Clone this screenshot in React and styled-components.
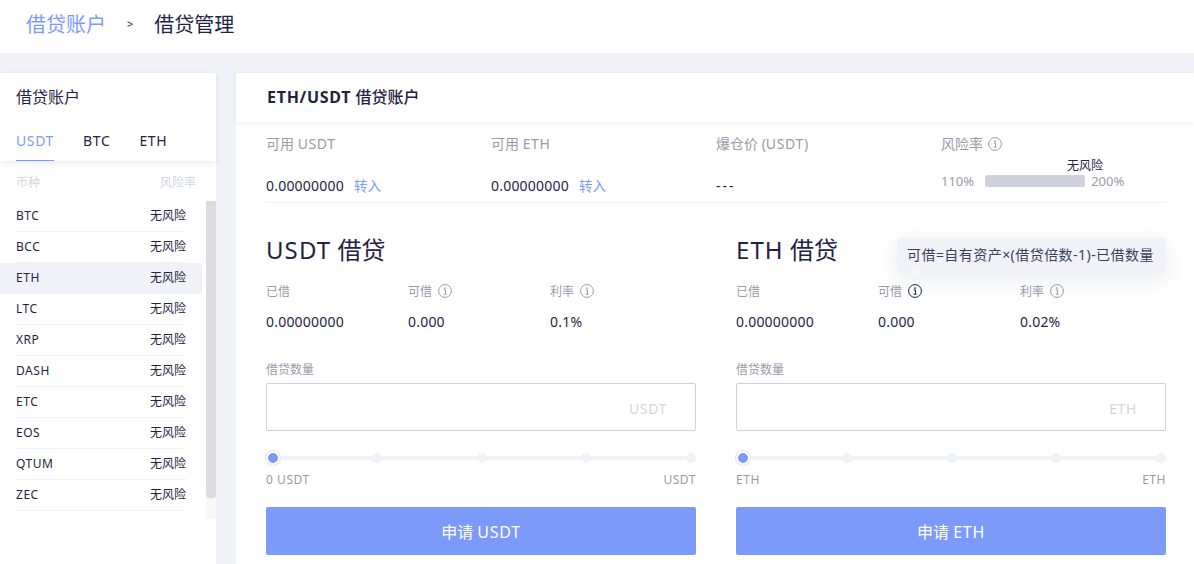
import React from 'react';
import styled, { createGlobalStyle } from 'styled-components';

const coins = ['BTC', 'BCC', 'ETH', 'LTC', 'XRP', 'DASH', 'ETC', 'EOS', 'QTUM', 'ZEC'];

const InfoIcon = ({ dark }) => (
  <Info viewBox="0 0 14 14" $dark={dark}>
    <circle cx="7" cy="7" r="6.4" fill="none" stroke="currentColor" strokeWidth="1" />
    <circle cx="7" cy="4.1" r="0.9" fill="currentColor" />
    <path d="M5.7 6h1.8v4M5.6 10.2h3" fill="none" stroke="currentColor" strokeWidth="1" />
  </Info>
);

const LoanPanel = ({ coin, rate, hovered }) => (
  <Panel>
    <PanelTitle>
      <Latin>{coin}</Latin> 借贷
    </PanelTitle>
    <Facts>
      <Fact>
        <SmallLabel>已借</SmallLabel>
        <FactValue>0.00000000</FactValue>
      </Fact>
      <Fact>
        <SmallLabel>
          可借 <InfoIcon dark={hovered} />
        </SmallLabel>
        <FactValue>0.000</FactValue>
      </Fact>
      <Fact>
        <SmallLabel>
          利率 <InfoIcon />
        </SmallLabel>
        <FactValue>{rate}</FactValue>
      </Fact>
    </Facts>
    <AmountLabel>借贷数量</AmountLabel>
    <AmountBox>
      <Unit>{coin}</Unit>
    </AmountBox>
    <Slider>
      <Knob />
      <Dot />
      <Dot />
      <Dot />
      <Dot />
    </Slider>
    <SliderLabels>
      <span>{coin === 'USDT' ? '0 USDT' : coin}</span>
      <span>{coin}</span>
    </SliderLabels>
    <ApplyButton>
      申请 <Latin>{coin}</Latin>
    </ApplyButton>
  </Panel>
);

const App = () => {
  return (
    <React.Fragment>
      <GlobalStyle />
      <Page>
        <TopBar>
          <Crumb>借贷账户</Crumb>
          <CrumbArrow>&gt;</CrumbArrow>
          <CrumbCurrent>借贷管理</CrumbCurrent>
        </TopBar>
        <Body>
          <Sidebar>
            <SideHead>
              <SideTitle>借贷账户</SideTitle>
              <Tabs>
                <Tab $active>USDT</Tab>
                <Tab>BTC</Tab>
                <Tab>ETH</Tab>
              </Tabs>
            </SideHead>
            <ListHead>
              <span>币种</span>
              <span>风险率</span>
            </ListHead>
            <ListArea>
              <CoinList>
                {coins.map((coin) => (
                  <CoinRow key={coin} $active={coin === 'ETH'}>
                    <CoinCell $active={coin === 'ETH'}>
                      <Latin>{coin}</Latin>
                      <span>无风险</span>
                    </CoinCell>
                  </CoinRow>
                ))}
              </CoinList>
              <ScrollTrack>
                <ScrollThumb />
              </ScrollTrack>
            </ListArea>
          </Sidebar>
          <Main>
            <MainHead>
              <Latin>ETH/USDT</Latin> <HeadCjk>借贷账户</HeadCjk>
            </MainHead>
            <Content>
              <Stats>
                <Stat>
                  <StatLabel>
                    可用 <Latin>USDT</Latin>
                  </StatLabel>
                  <StatValue>
                    <Digits>0.00000000</Digits>
                    <Transfer>转入</Transfer>
                  </StatValue>
                </Stat>
                <Stat>
                  <StatLabel>
                    可用 <Latin>ETH</Latin>
                  </StatLabel>
                  <StatValue>
                    <Digits>0.00000000</Digits>
                    <Transfer>转入</Transfer>
                  </StatValue>
                </Stat>
                <Stat>
                  <StatLabel>
                    爆仓价 (<Latin>USDT</Latin>)
                  </StatLabel>
                  <StatValue>
                    <Dashes>---</Dashes>
                  </StatValue>
                </Stat>
                <Stat>
                  <RiskLabel>
                    风险率 <InfoIcon />
                  </RiskLabel>
                  <RiskRow>
                    <RiskEnd>110%</RiskEnd>
                    <RiskBar>
                      <RiskText>无风险</RiskText>
                    </RiskBar>
                    <RiskEnd>200%</RiskEnd>
                  </RiskRow>
                </Stat>
              </Stats>
              <Panels>
                <LoanPanel coin="USDT" rate="0.1%" />
                <LoanPanel coin="ETH" rate="0.02%" hovered />
                <Tooltip>可借=自有资产×(借贷倍数-1)-已借数量</Tooltip>
              </Panels>
            </Content>
          </Main>
        </Body>
      </Page>
    </React.Fragment>
  );
};

export default App;

const GlobalStyle = createGlobalStyle`
  html, body {
    margin: 0;
    padding: 0;
    height: 100%;
    overflow: hidden;
  }
  body {
    font-family: "Noto Sans", "Noto Sans CJK SC", sans-serif;
    color: #1f2440;
  }
  * {
    box-sizing: border-box;
  }
`;

const Latin = styled.span`
  letter-spacing: 0.045em;
`;

const Digits = styled.span`
  letter-spacing: 0.015em;
`;

const Dashes = styled.span`
  letter-spacing: 2px;
`;

const Page = styled.div`
  width: 1194px;
  height: 564px;
  overflow: hidden;
  background-color: #f1f2f8;
`;

const TopBar = styled.div`
  height: 53px;
  padding: 0 0 6px 26px;
  display: flex;
  align-items: center;
  background-color: #fff;
`;

const Crumb = styled.span`
  font-size: 20px;
  color: #7c9afa;
`;

const CrumbArrow = styled.span`
  margin: 0 21px;
  font-size: 11px;
`;

const CrumbCurrent = styled.span`
  font-size: 20px;
`;

const Body = styled.div`
  display: flex;
  gap: 20px;
  margin-top: 20px;
  height: 491px;
`;

const Sidebar = styled.div`
  width: 216px;
  background-color: #fff;
  border-radius: 0 2px 0 0;
`;

const SideHead = styled.div`
  height: 88px;
  padding: 13px 0 0 16px;
  box-shadow: 0 2px 6px rgba(31, 36, 64, 0.1);
  position: relative;
`;

const SideTitle = styled.div`
  font-size: 16px;
  line-height: 22px;
`;

const Tabs = styled.div`
  display: flex;
  gap: 29px;
  margin-top: 22px;
`;

const Tab = styled.div`
  height: 31px;
  font-size: 14px;
  line-height: 22px;
  letter-spacing: 0.045em;
  color: ${(p) => (p.$active ? '#7c9afa' : '#1f2440')};
  border-bottom: 1px solid ${(p) => (p.$active ? '#7c9afa' : 'transparent')};
`;

const ListHead = styled.div`
  display: flex;
  justify-content: space-between;
  height: 40px;
  padding: 12px 20px 0 16px;
  font-size: 12px;
  line-height: 20px;
  color: #d3d4de;
`;

const ListArea = styled.div`
  display: flex;
  height: 318px;
`;

const CoinList = styled.div`
  width: 202px;
`;

const CoinRow = styled.div`
  height: 31px;
  padding: 0 16px;
  background-color: ${(p) => (p.$active ? '#f1f2f8' : 'transparent')};
  border-radius: 0 2px 2px 0;
`;

const CoinCell = styled.div`
  height: 31px;
  padding-bottom: 2px;
  display: flex;
  align-items: center;
  justify-content: space-between;
  font-size: 12px;
  border-bottom: 1px solid ${(p) => (p.$active ? 'transparent' : '#f1f2f8')};
`;

const ScrollTrack = styled.div`
  width: 10px;
  height: 318px;
  margin-left: 4px;
  background-color: #f8f8f8;
`;

const ScrollThumb = styled.div`
  height: 297px;
  background-color: #dcdcdf;
  border-radius: 0 0 3px 3px;
`;

const Main = styled.div`
  flex: 1;
  background-color: #fff;
`;

const MainHead = styled.div`
  height: 49px;
  padding-left: 31px;
  font-size: 16px;
  font-weight: 700;
  line-height: 48px;
  box-shadow: 0 1px 5px rgba(31, 36, 64, 0.08);
  position: relative;
`;

const HeadCjk = styled.span`
  font-weight: 500;
`;

const Content = styled.div`
  width: 900px;
  margin-left: 30px;
`;

const Stats = styled.div`
  display: grid;
  grid-template-columns: repeat(4, 225px);
  height: 81px;
  padding-top: 11px;
  border-bottom: 1px solid #f1f2f8;
`;

const Stat = styled.div`
  display: flex;
  flex-direction: column;
`;

const StatLabel = styled.div`
  font-size: 14px;
  line-height: 22px;
  color: #9a9aa8;
`;

const RiskLabel = styled(StatLabel)`
  display: flex;
  align-items: center;
  gap: 5px;
`;

const StatValue = styled.div`
  margin-top: 20px;
  font-size: 14px;
  line-height: 22px;
`;

const Transfer = styled.span`
  margin-left: 10px;
  font-size: 13.5px;
  color: #7c9afa;
`;

const RiskRow = styled.div`
  display: flex;
  align-items: center;
  margin-top: 18px;
  height: 16px;
`;

const RiskEnd = styled.span`
  font-size: 13px;
  color: #9a9aa8;
`;

const RiskBar = styled.div`
  position: relative;
  width: 100px;
  height: 12px;
  margin: 0 6px 0 11px;
  background-color: #d0d1de;
  border-radius: 2px;
`;

const RiskText = styled.span`
  position: absolute;
  right: -18px;
  top: -18px;
  font-size: 12px;
  line-height: 18px;
`;

const Panels = styled.div`
  position: relative;
  display: grid;
  grid-template-columns: 430px 430px;
  column-gap: 40px;
  padding-top: 29px;
`;

const Panel = styled.div`
  display: flex;
  flex-direction: column;
`;

const PanelTitle = styled.div`
  font-size: 24px;
  line-height: 36px;
`;

const Facts = styled.div`
  display: grid;
  grid-template-columns: repeat(3, 142px);
  margin-top: 14px;
`;

const Fact = styled.div`
  display: flex;
  flex-direction: column;
`;

const SmallLabel = styled.div`
  display: flex;
  align-items: center;
  gap: 6px;
  height: 18px;
  font-size: 12px;
  color: #9a9aa8;
`;

const Info = styled.svg`
  width: 14px;
  height: 14px;
  color: ${(p) => (p.$dark ? '#1f2440' : '#9a9aa8')};
`;

const FactValue = styled.div`
  margin-top: 11px;
  font-size: 14px;
  line-height: 22px;
  letter-spacing: 0.015em;
`;

const AmountLabel = styled.div`
  margin-top: 28px;
  font-size: 12px;
  line-height: 18px;
  color: #9a9aa8;
`;

const AmountBox = styled.div`
  display: flex;
  align-items: center;
  justify-content: flex-end;
  height: 48px;
  margin-top: 4px;
  padding: 3px 28px 0 0;
  border: 1px solid #d0d1de;
  border-radius: 2px;
`;

const Unit = styled.span`
  font-size: 14px;
  letter-spacing: 0.045em;
  color: #d3d4de;
`;

const Slider = styled.div`
  position: relative;
  display: flex;
  align-items: center;
  justify-content: space-between;
  height: 10px;
  margin-top: 22px;
  padding-left: 106px;
  background: linear-gradient(#f1f2f8, #f1f2f8) center / 100% 4px no-repeat;
`;

const Knob = styled.span`
  position: absolute;
  left: 0;
  top: -2px;
  width: 14px;
  height: 14px;
  background-color: #7c9afa;
  border: 2px solid #fff;
  border-radius: 50%;
  box-shadow: 0 0 0 1px #e3e4ec;
`;

const Dot = styled.span`
  width: 10px;
  height: 10px;
  background-color: #f1f2f8;
  border-radius: 50%;
`;

const SliderLabels = styled.div`
  display: flex;
  justify-content: space-between;
  margin-top: 8px;
  font-size: 12px;
  line-height: 18px;
  letter-spacing: 0.045em;
  color: #9a9aa8;
`;

const ApplyButton = styled.div`
  height: 48px;
  margin-top: 18px;
  font-size: 16px;
  line-height: 50px;
  text-align: center;
  color: #fff;
  background-color: #7c9afa;
  border-radius: 2px;
`;

const Tooltip = styled.div`
  position: absolute;
  top: 35px;
  right: 0;
  width: 269px;
  height: 34px;
  padding-left: 10px;
  font-size: 14px;
  line-height: 34px;
  letter-spacing: 0.45px;
  white-space: nowrap;
  color: #3b4058;
  background-color: #f1f2f8;
  border-radius: 4px;
  box-shadow: 0 6px 24px rgba(31, 36, 64, 0.1);

  &::after {
    content: '';
    position: absolute;
    left: 16px;
    bottom: -4px;
    width: 8px;
    height: 8px;
    background-color: #f7f7fb;
    transform: rotate(45deg);
  }
`;
